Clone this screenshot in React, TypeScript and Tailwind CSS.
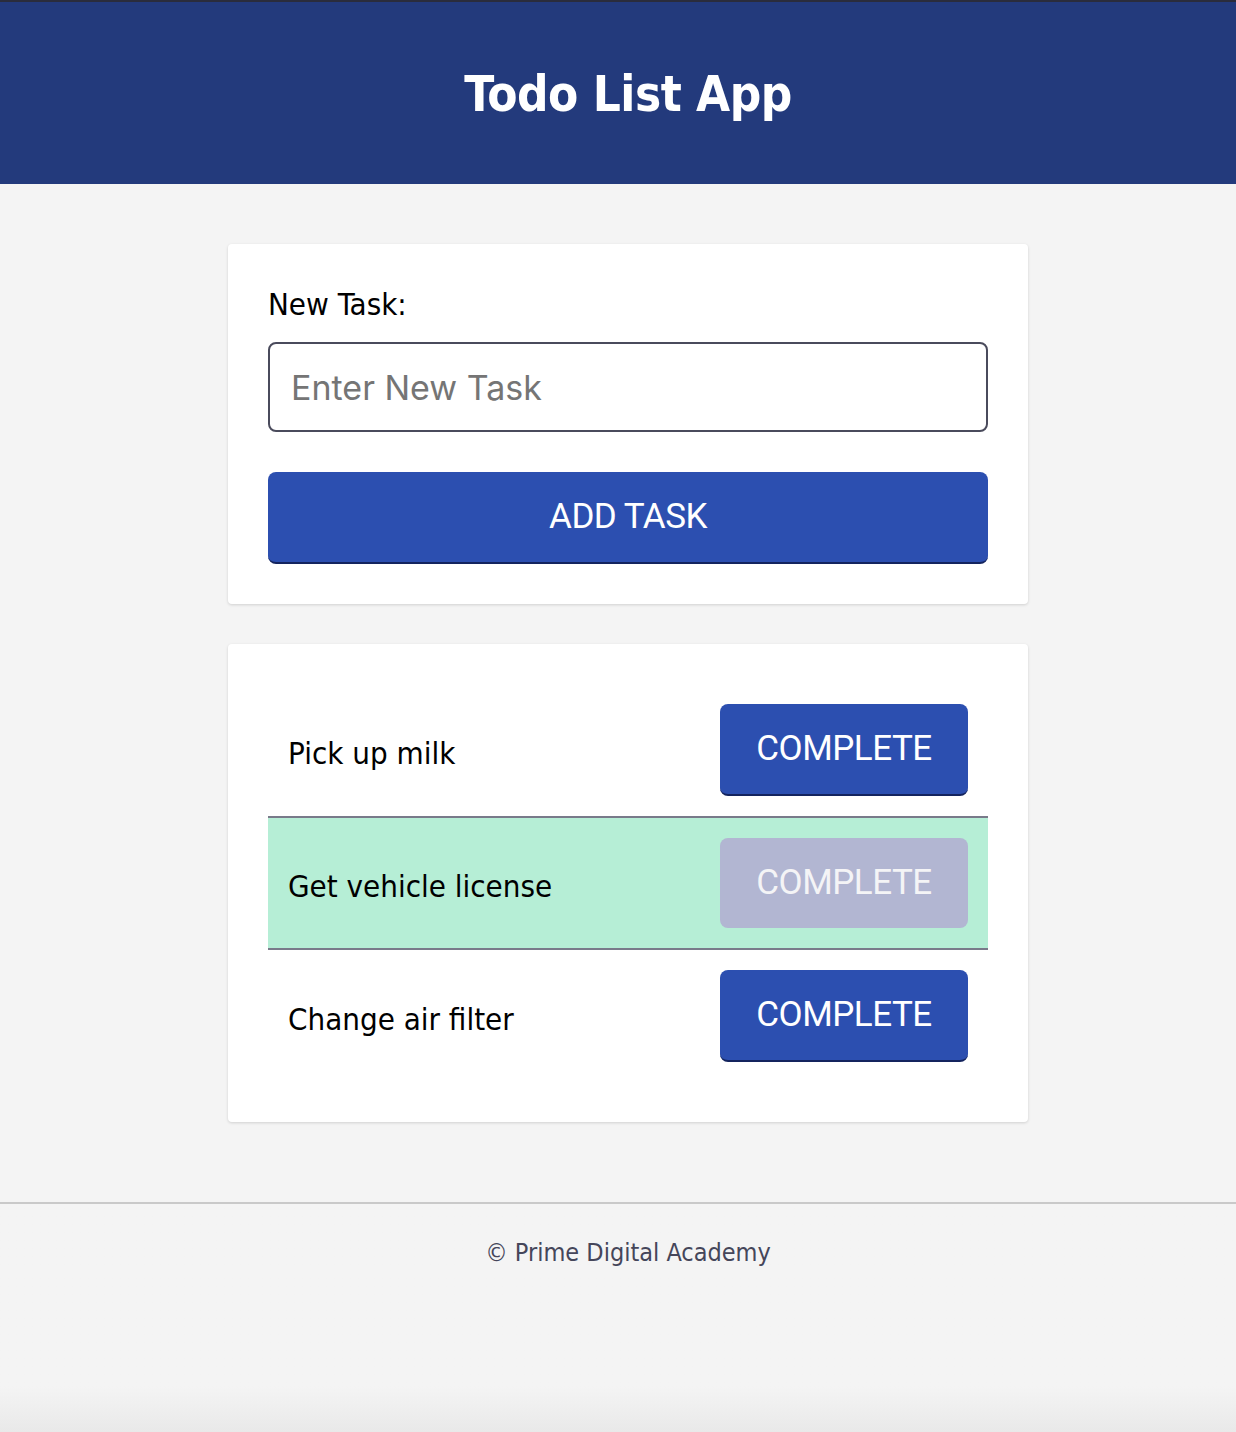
import { useState } from 'react';

const tahoma = 'font-["DejaVu_Sans_Condensed","DejaVu_Sans",sans-serif]';

export default function App() {
  const [tasks, setTasks] = useState([
    { id: 1, name: 'Pick up milk', done: false },
    { id: 2, name: 'Get vehicle license', done: true },
    { id: 3, name: 'Change air filter', done: false },
  ]);
  const [newTask, setNewTask] = useState('');

  const addTask = () => {
    if (!newTask.trim()) return;
    setTasks([...tasks, { id: Date.now(), name: newTask, done: false }]);
    setNewTask('');
  };

  const completeTask = (id: number) => {
    setTasks(tasks.map((t) => (t.id === id ? { ...t, done: true } : t)));
  };

  return (
    <div className={`min-h-[1432px] bg-[#f4f4f4] flex flex-col ${tahoma}`}>
      {/* Header */}
      <header className="bg-[#233a7c] border-t-2 border-[#2a2c3c] h-[184px] pl-[20px] flex items-center justify-center">
        <h1 className="text-white text-[49px] font-bold tracking-[-0.5px] leading-none mt-[2px]">Todo List App</h1>
      </header>

      <div className="pl-[20px]">
        <main className="w-[800px] mx-auto pt-[60px] pb-[80px] flex flex-col gap-[40px]">
          {/* New task form */}
          <div className="bg-white rounded-[4px] shadow-[0_1px_3px_rgba(0,0,0,0.15)] p-[40px]">
            <label className="block text-[31px] text-black leading-[40px] mb-[18px]">New Task:</label>
            <input
              value={newTask}
              onChange={(e) => setNewTask(e.target.value)}
              placeholder="Enter New Task"
              className="w-full h-[90px] border-2 border-[#4a4b5c] rounded-[8px] px-[21px] text-[34px] font-['Inter',sans-serif] text-black placeholder:text-[#757575] outline-none"
            />
            <button
              onClick={addTask}
              className="mt-[40px] w-full h-[92px] bg-[#2c4fb0] border-b-2 border-[#14245e] rounded-[8px] text-white text-[35px] font-['Roboto',sans-serif] tracking-[-0.5px]"
            >
              ADD TASK
            </button>
          </div>

          {/* Task list */}
          <div className="bg-white rounded-[4px] shadow-[0_1px_3px_rgba(0,0,0,0.15)] p-[40px]">
            {tasks.map((task, idx) => (
              <div
                key={task.id}
                className={`flex items-center justify-between p-[20px] ${idx < tasks.length - 1 ? 'border-b-2 border-[#797a8a]' : ''} ${task.done ? 'bg-[#b6eed6]' : ''}`}
              >
                <span className="text-[31px] text-black mt-[6px]">{task.name}</span>
                <button
                  onClick={() => completeTask(task.id)}
                  disabled={task.done}
                  className={`w-[248px] rounded-[8px] text-[35px] font-['Roboto',sans-serif] tracking-[-0.5px] ${
                    task.done
                      ? 'bg-[#b2b6d2] text-[#f4f4f6] h-[90px]'
                      : 'bg-[#2c4fb0] text-white h-[92px] border-b-2 border-[#14245e]'
                  }`}
                >
                  COMPLETE
                </button>
              </div>
            ))}
          </div>
        </main>
      </div>

      {/* Footer */}
      <footer className="border-t-2 border-[#c9c9c9] pt-[30px] pl-[20px] text-center flex-1 bg-gradient-to-b from-[#f4f4f4] from-[80%] to-[#e9e9e9]">
        <p className="text-[25px] text-[#45465a]">© Prime Digital Academy</p>
      </footer>
    </div>
  );
}
